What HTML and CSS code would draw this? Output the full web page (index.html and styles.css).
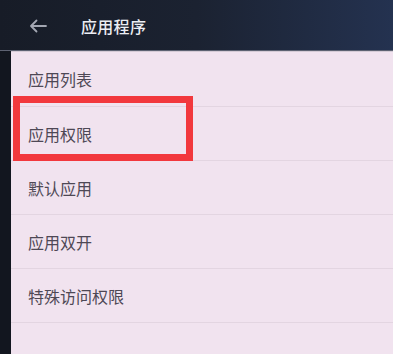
FILE: index.html
```html
<!DOCTYPE html>
<html lang="zh-CN">
<head>
    <meta charset="UTF-8">
    <meta name="viewport" content="width=device-width, initial-scale=1.0">
    <title>应用程序</title>
    <link rel="stylesheet" href="styles.css">
</head>
<body>
    <div class="screen">
        <!-- 顶部标题栏 -->
        <div class="header">
            <svg class="back" width="18" height="14" viewBox="0 0 18 14">
                <path d="M17 7H2M7.5 1.5L2 7l5.5 5.5" fill="none" stroke="#a3a7b2" stroke-width="1.8" stroke-linecap="round" stroke-linejoin="round"/>
            </svg>
            <span class="title">应用程序</span>
        </div>

        <!-- 菜单列表 -->
        <div class="panel">
            <div class="row first">应用列表</div>
            <div class="row mark">应用权限<span class="highlight"></span></div>
            <div class="row">默认应用</div>
            <div class="row">应用双开</div>
            <div class="row">特殊访问权限</div>
        </div>
    </div>
</body>
</html>
```

FILE: styles.css
```css
html, body {
    margin: 0;
    padding: 0;
}
body {
    width: 393px;
    height: 354px;
    overflow: hidden;
    background-color: #12161f;
    font-family: "Noto Sans CJK SC", "Noto Sans", sans-serif;
}
.screen {
    display: flex;
    flex-direction: column;
    height: 354px;
}
.header {
    height: 51px;
    display: flex;
    align-items: center;
    padding-left: 29px;
    background: linear-gradient(90deg, #171c27 0%, #1b2231 50%, #243250 100%);
    box-shadow: inset 0 -1px 0 #5d6272;
}
.back {
    display: block;
    margin-top: 1px;
}
.title {
    margin-left: 34px;
    color: #eceef3;
    font-size: 16px;
    font-weight: 500;
    letter-spacing: 0.3px;
}
.panel {
    flex: 1;
    margin-left: 11px;
    background-color: #f1e3ef;
    border-top: 1px solid #d5cbd6;
}
.row {
    position: relative;
    height: 53px;
    display: flex;
    align-items: center;
    padding-left: 17px;
    color: #4e4855;
    font-size: 16px;
    border-bottom: 1px solid #e3d5e1;
}
.row.first {
    height: 54px;
}
.highlight {
    position: absolute;
    left: 2px;
    top: -11px;
    width: 166px;
    height: 51px;
    border: 7px solid #f2383d;
}
```
